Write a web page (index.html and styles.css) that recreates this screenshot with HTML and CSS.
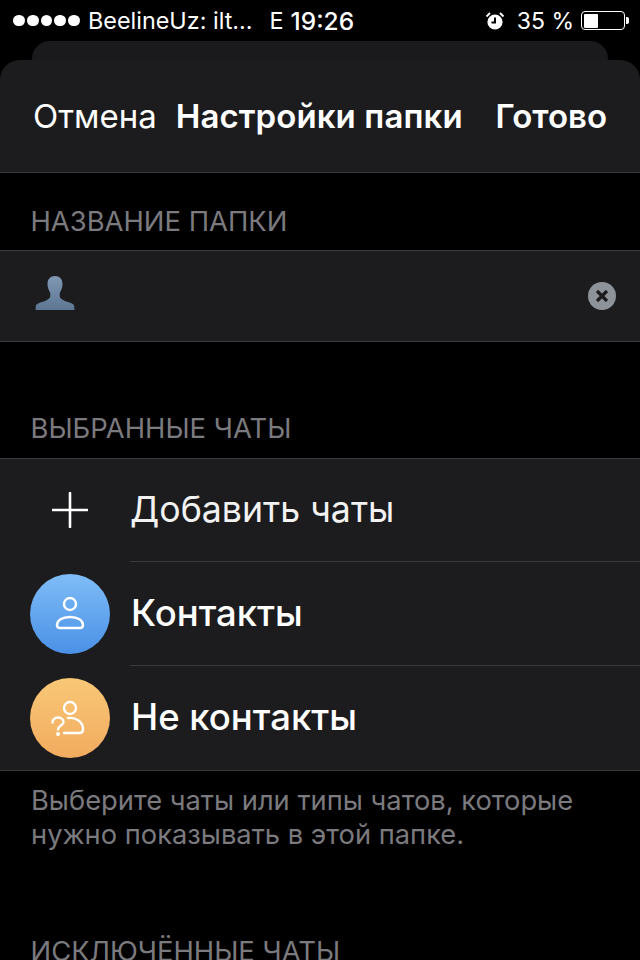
FILE: index.html
```html
<!DOCTYPE html>
<html lang="ru">
<head>
<meta charset="utf-8">
<title>Настройки папки</title>
<link rel="stylesheet" href="styles.css">
</head>
<body>
<div class="status">
  <div class="status-left">
    <div class="signal"><i></i><i></i><i></i><i></i><i></i></div>
    <span class="carrier">BeelineUz: ilt...</span>
    <span class="net">E</span>
    <span class="time">19:26</span>
  </div>
  <div class="status-right">
    <svg class="alarm" width="20" height="20" viewBox="0 0 20 20"><circle cx="10" cy="11" r="7.6" fill="#fff"/><path d="M10 6.500V11.500H6.500" fill="none" stroke="#000" stroke-width="2"/><path d="M1.500 5.500 5 2M18.500 5.500 15 2" stroke="#fff" stroke-width="1.800" fill="none"/></svg>
    <span class="pct">35 %</span>
    <div class="battery"><div class="battery-fill"></div></div>
    <div class="battery-tip"></div>
  </div>
</div>
<div class="back-card"></div>
<main class="sheet">
  <header class="nav">
    <span class="nav-cancel">Отмена</span>
    <span class="nav-title">Настройки папки</span>
    <span class="nav-done">Готово</span>
  </header>
  <div class="section-head head-first">НАЗВАНИЕ ПАПКИ</div>
  <div class="name-row">
    <svg class="user-icon" width="40" height="34" viewBox="0 0 40 34"><defs><linearGradient id="u" x1="0" y1="0" x2="0" y2="1"><stop offset="0" stop-color="#8198b4"/><stop offset="1" stop-color="#5c7693"/></linearGradient></defs><path d="M20 0c4.500 0 7.500 3 7.500 8 0 3.500-1.300 6.500-2.500 8.500-.5 1-.5 4.500.3 5.500 1.500 1.500 3.700 2.700 6.700 3.700 4 1.300 6.500 1.800 7 3.800.3 1.200.4 2.500.4 4.500H.6c0-2 .1-3.300.4-4.500.5-2 3-2.500 7-3.800 3-1 5.200-2.200 6.700-3.700.8-1 .8-4.500.3-5.500-1.200-2-2.500-5-2.500-8.500 0-5 3-8 7.500-8z" fill="url(#u)"/></svg>
    <svg class="clear-icon" width="28" height="28" viewBox="0 0 28 28"><circle cx="14" cy="14" r="14" fill="#8e9299"/><path d="M9 9 19 19M19 9 9 19" stroke="#1c1c1e" stroke-width="3.200"/></svg>
  </div>
  <div class="section-head head-chats">ВЫБРАННЫЕ ЧАТЫ</div>
  <div class="list">
    <div class="item item-add">
      <div class="item-icon"><svg width="36" height="36" viewBox="0 0 36 36"><path d="M18 1V35M1 18H35" stroke="#fff" stroke-width="2.600" stroke-linecap="round"/></svg></div>
      <div class="item-label label-add">Добавить чаты</div>
    </div>
    <div class="item">
      <div class="item-icon"><div class="avatar avatar-blue"><svg width="30" height="34" viewBox="0 0 30 34"><circle cx="15" cy="7" r="6" fill="none" stroke="#fff" stroke-width="2.400"/><path d="M15 20C7 20 2 23.500 2 28c0 2 1 3 3 3h20c2 0 3-1 3-3 0-4.500-5-8-13-8z" fill="none" stroke="#fff" stroke-width="2.400"/></svg></div></div>
      <div class="item-label">Контакты</div>
    </div>
    <div class="item">
      <div class="item-icon"><div class="avatar avatar-orange"><svg width="40" height="44" viewBox="0 0 40 44"><circle cx="20" cy="12" r="6" fill="none" stroke="#fff" stroke-width="2.400"/><path d="M18 22C26 21 33 26 33 33c0 2.500-1 4-3 4H14" fill="none" stroke="#fff" stroke-width="2.400" stroke-linecap="round"/><path d="M2.500 26.500c0-3 2.300-5 5.500-5s5.500 2 5.500 4.500c0 3.500-5.500 3.500-5.500 7.500" fill="none" stroke="#fff" stroke-width="2.400" stroke-linecap="round"/><circle cx="8" cy="38" r="2" fill="#fff"/></svg></div></div>
      <div class="item-label">Не контакты</div>
    </div>
  </div>
  <p class="footnote">Выберите чаты или типы чатов, которые нужно показывать в этой папке.</p>
  <div class="section-head head-excl">ИСКЛЮЧЁННЫЕ ЧАТЫ</div>
</main>
</body>
</html>
```
FILE: styles.css
```css
* { box-sizing: border-box; }
html, body { margin: 0; height: 960px; overflow: hidden; background: #000; }
body { font-family: Inter, "Noto Sans", sans-serif; color: #fff; }

.status { height: 41px; display: flex; justify-content: space-between; align-items: center; padding: 0 0 0 13px; }
.status-left, .status-right { display: flex; align-items: center; }
.signal { display: flex; gap: 2px; margin-right: 8px; }
.signal i { width: 11.800px; height: 11.800px; border-radius: 50%; background: #fff; }
.carrier { font-size: 23.400px; font-weight: 400; }
.net { font-size: 23.400px; margin-left: 17px; }
.time { font-size: 24.500px; font-weight: 500; margin-left: 7px; }
.alarm { margin-right: 12px; }
.pct { font-size: 23px; }
.battery { width: 44px; height: 19px; border: 1px solid #fff; border-radius: 4px; padding: 1.500px; margin-left: 7px; }
.battery-fill { width: 14px; height: 14px; background: #fff; border-radius: 1px; }
.battery-tip { width: 3px; height: 7px; background: #fff; border-radius: 0 2px 2px 0; margin: 0 11px 0 1px; }

.back-card { height: 19px; margin: 0 32px; background: #1a1a1c; border-radius: 18px 18px 0 0; }
.sheet { height: 900px; background: #000; border-radius: 20px 20px 0 0; overflow: hidden; }

.nav { height: 113px; background: #1c1c1e; border-bottom: 1px solid #3a3a3c; display: flex; align-items: center; padding: 0 33px; justify-content: space-between; font-size: 33px; }
.nav-cancel { font-weight: 400; }
.nav-title { font-weight: 600; letter-spacing: .1px; margin-right: 14px; }
.nav-done { font-weight: 600; }

.section-head { font-size: 27.400px; color: #7a7a7f; padding-left: 30.500px; }
.head-first { height: 77px; padding-top: 31px; }
.head-chats { height: 116px; padding-top: 69px; }
.head-excl { padding-top: 69px; }

.name-row { height: 92px; background: #1c1c1e; border-top: 1px solid #3a3a3c; border-bottom: 1px solid #3a3a3c; display: flex; align-items: center; justify-content: space-between; padding: 0 24px 6px 35px; }
.clear-icon { margin-top: 6px; }

.list { background: #1c1c1e; border-top: 1px solid #3a3a3c; border-bottom: 1px solid #3a3a3c; height: 313px; }
.item { height: 104px; display: flex; align-items: center; }
.item-add { height: 102px; }
.item-icon { width: 130px; flex: none; display: flex; align-items: center; padding: 2px 0 0 30px; }
.item-add .item-icon { padding: 0 0 0 52px; }
.item-label { flex: 1; height: 100%; display: flex; align-items: center; font-size: 36.500px; font-weight: 500; border-top: 1px solid #3a3a3c; padding-left: 1px; padding-bottom: 2px; }
.item-add .item-label { border-top: 0; }
.label-add { font-weight: 400; padding-left: 0; font-size: 35.700px; color: #f2f2f2; }
.avatar { width: 80px; height: 80px; border-radius: 50%; display: flex; align-items: center; justify-content: center; flex: none; }
.avatar-blue { background: linear-gradient(#7fbdf7, #4a90e6); }
.avatar-orange { background: linear-gradient(#f8c877, #f2ab5f); }

.footnote { margin: 0; padding: 13px 31px 0; font-size: 27.300px; line-height: 34px; color: #7a7a7f; height: 94px; }
```
